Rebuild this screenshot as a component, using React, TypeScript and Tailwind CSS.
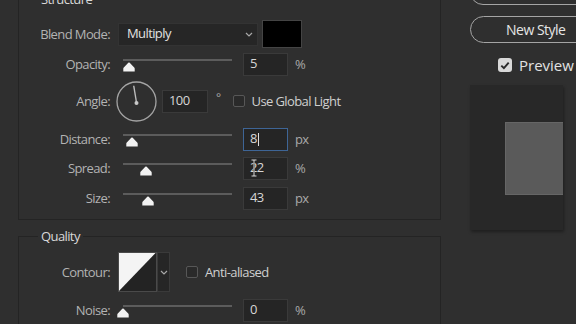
import React from "react";

const FONT = { fontFamily: '"Open Sans", "Noto Sans", sans-serif' };

function Chevron({ className = "" }: { className?: string }) {
  return (
    <svg width="8" height="5" viewBox="0 0 8 5" className={className}>
      <path d="M1 1 L4 4 L7 1" fill="none" stroke="#a8a8a8" strokeWidth="1.2" />
    </svg>
  );
}

function Thumb() {
  return (
    <svg width="12" height="10" viewBox="0 0 12 10">
      <path d="M6 0.5 C6.6 0.5 7 0.9 7.4 1.4 L11.2 5.6 C11.6 6 11.7 6.3 11.7 6.8 L11.7 9.5 L0.3 9.5 L0.3 6.8 C0.3 6.3 0.4 6 0.8 5.6 L4.6 1.4 C5 0.9 5.4 0.5 6 0.5 Z" fill="#f2f2f2" />
    </svg>
  );
}

function Slider({ thumbX }: { thumbX: number }) {
  return (
    <div className="relative ml-[8px] h-[24px] w-[125px] shrink-0">
      <div className="ml-[5px] mt-[7px] h-[2px] w-[109px] bg-[#5c5c5c]" />
      <div className="absolute top-[10px]" style={{ left: thumbX - 118 - 6 }}>
        <Thumb />
      </div>
    </div>
  );
}

function Label({ children }: { children: React.ReactNode }) {
  return (
    <div className="w-[91px] shrink-0 text-right text-[13px] leading-[16px] text-[#b3b3b3]">
      {children}
    </div>
  );
}

function NumInput({
  value,
  focused = false,
  cursor = false,
  w = "w-[45px]",
  className = "",
}: {
  value: string;
  focused?: boolean;
  cursor?: boolean;
  w?: string;
  className?: string;
}) {
  return (
    <div
      className={`relative flex h-[23px] ${w} ${className} shrink-0 items-center border bg-[#252525] pl-[6px] text-[13px] text-[#d6d6d6] ${
        focused ? "border-[#3e6596]" : "border-[#3a3a3a]"
      }`}
    >
      <span>{value}</span>
      {focused && <span className="ml-[1px] h-[13px] w-[1px] bg-[#e0e0e0]" />}
      {cursor && (
        <svg
          width="8"
          height="18"
          viewBox="0 0 8 18"
          className="absolute left-[6px] top-[1px]"
        >
          <path
            d="M1.5 1 H6.5 M4 1 V17 M1.5 17 H6.5"
            fill="none"
            stroke="#1c1c1c"
            strokeWidth="1.8"
            strokeOpacity="0.7"
          />
          <path
            d="M1.5 1 H6.5 M4 1 V17 M1.5 17 H6.5"
            fill="none"
            stroke="#f0f0f0"
            strokeWidth="0.9"
          />
        </svg>
      )}
    </div>
  );
}

function Unit({ children }: { children: React.ReactNode }) {
  return (
    <div className="ml-[7px] text-[13px] leading-[16px] text-[#a9a9a9]">{children}</div>
  );
}

function Checkbox({ checked = false }: { checked?: boolean }) {
  if (checked) {
    return (
      <div className="flex h-[14px] w-[14px] shrink-0 items-center justify-center rounded-[3px] bg-[#d9d9d9]">
        <svg width="10" height="9" viewBox="0 0 10 9">
          <path d="M1.3 4.6 L3.9 7.2 L8.7 1.6" fill="none" stroke="#2a2a2a" strokeWidth="1.9" />
        </svg>
      </div>
    );
  }
  return (
    <div className="h-[12px] w-[12px] shrink-0 rounded-[2px] border border-[#575757] bg-[#2a2a2a]" />
  );
}

function SliderRow({
  label,
  thumbX,
  value,
  unit,
  mt,
  focused,
  cursor,
}: {
  label: string;
  thumbX: number;
  value: string;
  unit: string;
  mt: string;
  focused?: boolean;
  cursor?: boolean;
}) {
  return (
    <div className={`flex h-[24px] items-center ${mt}`}>
      <Label>{label}</Label>
      <Slider thumbX={thumbX} />
      <NumInput value={value} focused={focused} cursor={cursor} />
      <Unit>{unit}</Unit>
    </div>
  );
}

function Dial() {
  // angle 100deg
  const a = (100 * Math.PI) / 180;
  const cx = 20.5;
  const cy = 20.5;
  const ex = cx + Math.cos(a) * 16;
  const ey = cy - Math.sin(a) * 16;
  return (
    <svg width="41" height="41" viewBox="0 0 41 41" className="ml-[6px] shrink-0">
      <circle cx={cx} cy={cy} r="19.5" fill="none" stroke="#a3a3a3" strokeWidth="1.3" />
      <line x1={cx} y1={cy + 1} x2={ex} y2={ey} stroke="#bdbdbd" strokeWidth="1.4" />
      <circle cx={cx} cy={cy + 1.5} r="2" fill="#c8c8c8" />
    </svg>
  );
}

export default function App() {
  return (
    <div
      className="flex h-[324px] w-[576px] overflow-hidden bg-[#2f2f2f] tracking-[-0.6px]"
      style={FONT}
    >
      {/* Left column */}
      <div className="flex w-[441px] shrink-0 flex-col">
        <fieldset className="ml-[18px] mt-[-9px] w-[423px] border border-[#242424] pb-[9px]">
          <legend className="ml-[19px] px-[3px] text-[13px] leading-[16px] text-[#d9d9d9]">
            Structure
          </legend>

          {/* Blend mode */}
          <div className="mt-[13px] flex h-[28px] items-center">
            <Label>Blend Mode:</Label>
            <div className="ml-[8px] flex h-[23px] w-[140px] shrink-0 items-center justify-between border border-[#333] bg-[#262626] pl-[8px] pr-[4px] text-[13px] text-[#e2e2e2]">
              <span>Multiply</span>
              <Chevron />
            </div>
            <div className="ml-[4px] h-[28px] w-[40px] shrink-0 border border-[#444] bg-black" />
          </div>

          <SliderRow label="Opacity:" thumbX={129} value="5" unit="%" mt="mt-[4px]" />

          {/* Angle */}
          <div className="mt-[5px] flex h-[40px] items-center">
            <Label>Angle:</Label>
            <Dial />
            <NumInput value="100" w="w-[46px]" className="ml-[5px]" />
            <div className="ml-[8px] mb-[6px] text-[12px] leading-[12px] text-[#a9a9a9]">°</div>
            <div className="ml-[12px]">
              <Checkbox />
            </div>
            <div className="ml-[7px] text-[13px] leading-[16px] text-[#d0d0d0]">
              Use Global Light
            </div>
          </div>

          <SliderRow label="Distance:" thumbX={132} value="8" unit="px" mt="mt-[6px]" focused />
          <SliderRow label="Spread:" thumbX={146} value="22" unit="%" mt="mt-[5px]" cursor />
          <SliderRow label="Size:" thumbX={148} value="43" unit="px" mt="mt-[6px]" />
        </fieldset>

        <fieldset className="ml-[18px] mt-[8px] w-[423px] border border-[#242424] pb-[20px]">
          <legend className="ml-[19px] px-[3px] text-[13px] leading-[16px] text-[#d9d9d9]">
            Quality
          </legend>

          {/* Contour */}
          <div className="mt-[8px] flex h-[40px] items-center">
            <Label>Contour:</Label>
            <div className="ml-[8px] flex h-[40px] shrink-0">
              <svg width="39" height="40" viewBox="0 0 39 40">
                <rect x="0" y="0" width="39" height="40" fill="#232323" />
                <polygon points="0.5,0.5 38,0.5 0.5,39.5" fill="#f4f4f4" />
                <rect x="0.5" y="0.5" width="38" height="39" fill="none" stroke="#4a4a4a" />
              </svg>
              <div className="flex w-[13px] items-center justify-center border border-[#3a3a3a] bg-[#262626]">
                <Chevron />
              </div>
            </div>
            <div className="ml-[16px]">
              <Checkbox />
            </div>
            <div className="ml-[7px] text-[13px] leading-[16px] text-[#d0d0d0]">
              Anti-aliased
            </div>
          </div>

          <SliderRow label="Noise:" thumbX={123} value="0" unit="%" mt="mt-[6px]" />
        </fieldset>
      </div>

      {/* Right column */}
      <div className="ml-[29px] flex flex-1 flex-col">
        <div className="mt-[-21px] h-[26px] w-[130px] shrink-0 rounded-full border border-[#a5a5a5]" />
        <div className="mt-[11px] flex h-[27px] w-[130px] shrink-0 items-center rounded-full border border-[#a5a5a5] pl-[35px] text-[14px] tracking-[-0.5px] text-[#e6e6e6]">
          New Style
        </div>
        <div className="mt-[14px] flex h-[16px] items-center pl-[28px]">
          <Checkbox checked />
          <span className="ml-[7px] whitespace-nowrap text-[15px] tracking-[0px] text-[#e2e2e2]">Preview</span>
        </div>
        <div className="mt-[12px] h-[145px] w-[93px] shrink-0 overflow-hidden bg-[#282828] pl-[35px] pt-[37px] shadow-[1px_2px_3px_rgba(0,0,0,0.35)]">
          <div className="h-[73px] w-[59px] border border-[#666] bg-[#5a5a5a]" />
        </div>
      </div>
    </div>
  );
}
